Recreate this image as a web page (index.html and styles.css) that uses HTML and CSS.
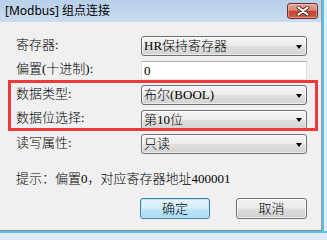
FILE: index.html
```html
<!DOCTYPE html>
<html lang="zh-CN">
<head>
<meta charset="utf-8">
<title>[Modbus] 组点连接</title>
<link rel="stylesheet" href="styles.css">
</head>
<body>
<div class="screen">
  <div class="frame-row">
    <div class="window">
      <div class="titlebar">
        <span class="title">[Modbus] 组点连接</span>
        <span class="close">
          <svg width="14" height="10" viewBox="0 0 14 10">
            <path d="M2.5 1.5 L11.5 8.5 M11.5 1.5 L2.5 8.5" stroke="#5b2a25" stroke-width="4" stroke-linecap="round" fill="none"/>
            <path d="M2.5 1.5 L11.5 8.5 M11.5 1.5 L2.5 8.5" stroke="#ffffff" stroke-width="2.2" stroke-linecap="round" fill="none"/>
          </svg>
        </span>
      </div>
      <div class="content">
        <div class="form">
          <span class="lbl">寄存器:</span>
          <div class="select"><span>HR保持寄存器</span><i class="arrow"></i></div>
          <span class="lbl">偏置(十进制):</span>
          <div class="input">0</div>
          <span class="lbl">数据类型:</span>
          <div class="select"><span>布尔(BOOL)</span><i class="arrow"></i></div>
          <span class="lbl">数据位选择:</span>
          <div class="select"><span>第10位</span><i class="arrow"></i></div>
          <span class="lbl">读写属性:</span>
          <div class="select"><span>只读</span><i class="arrow"></i></div>
        </div>
        <p class="hint">提示：偏置0，对应寄存器地址400001</p>
        <div class="buttons">
          <button class="btn primary">确定</button>
          <button class="btn cancel">取消</button>
        </div>
      </div>
      <div class="highlight"></div>
    </div>
    <div class="frame-right"></div>
  </div>
  <div class="frame-bottom"></div>
</div>
</body>
</html>
```
FILE: styles.css
```css
html, body {
  margin: 0;
  padding: 0;
  background: #dfeaf6;
}

.screen {
  width: 327px;
  height: 234px;
  display: flex;
  flex-direction: column;
  overflow: hidden;
  background: #e2ecf7;
}

.frame-row {
  display: flex;
  height: 231px;
  flex: none;
}

.window {
  width: 322px;
  height: 231px;
  box-sizing: border-box;
  border-right: 1px solid #9a9a9a;
  border-bottom: 1px solid #8a8a8a;
  background: #f0f0f0;
  display: flex;
  flex-direction: column;
  position: relative;
}

.frame-right {
  width: 5px;
  background: linear-gradient(to right, #56c0ee 0, #56c0ee 2px, #e2ecf7 2px);
}

.frame-bottom {
  height: 3px;
  flex: none;
  background: linear-gradient(#56c0ee 0, #56c0ee 2px, #e2ecf7 2px);
}

.titlebar {
  height: 22px;
  flex: none;
  display: flex;
  justify-content: space-between;
  align-items: flex-start;
  background: linear-gradient(#b8d0ea, #c9dcf1);
}

.title {
  font: 12px/22px "Noto Sans", "Noto Sans CJK SC", sans-serif;
  color: #000;
  padding-left: 5px;
}

.close {
  width: 31px;
  height: 16px;
  margin: 3px 3px 0 0;
  box-sizing: border-box;
  border: 1px solid #6e2f28;
  border-radius: 3px;
  background: linear-gradient(#e8a99c 0%, #d88574 45%, #c4442f 52%, #cc5f4a 100%);
  box-shadow: inset 0 0 0 1px rgba(255, 210, 200, 0.45);
  display: flex;
  align-items: center;
  justify-content: center;
}

.close svg {
  display: block;
}

.content {
  flex: 1;
  padding: 14px 0 0 16px;
  font: 300 13px/16px "Liberation Serif", "Noto Sans CJK SC", serif;
  color: #000;
}

.form {
  display: grid;
  grid-template-columns: 125px 166px;
  grid-auto-rows: 20px;
  row-gap: 4.5px;
  align-items: center;
}

.lbl {
  padding-bottom: 3px;
  white-space: nowrap;
}

.select {
  height: 20px;
  box-sizing: border-box;
  border: 1px solid #707070;
  border-radius: 3px;
  background: linear-gradient(#f6f6f6 0%, #ececec 48%, #e0e0e0 52%, #d2d2d2 100%);
  box-shadow: inset 0 0 0 1px rgba(255, 255, 255, 0.6);
  display: flex;
  align-items: center;
  justify-content: space-between;
  padding: 0 4px 0 2px;
  white-space: nowrap;
}

.arrow {
  width: 0;
  height: 0;
  border-left: 3.5px solid transparent;
  border-right: 3.5px solid transparent;
  border-top: 4px solid #000;
  margin-top: 1px;
}

.input {
  align-self: start;
  height: 19px;
  box-sizing: border-box;
  border: 1px solid #abadb3;
  border-color: #abadb3 #dbdfe6 #e3e9ef #e2e3ea;
  background: #fff;
  padding-left: 2px;
  line-height: 17px;
}

.hint {
  margin: 17px 0 0 0;
  white-space: nowrap;
}

.buttons {
  display: flex;
  gap: 26px;
  margin-top: 11px;
  padding-left: 124px;
}

.btn {
  height: 21px;
  width: 70px;
  box-sizing: border-box;
  border-radius: 3px;
  font: 300 13px/16px "Liberation Serif", "Noto Sans CJK SC", serif;
  color: #000;
  padding: 0;
  margin: 0;
}

.btn.primary {
  border: 1px solid #3c7fb1;
  background: linear-gradient(#e6f5fd 0%, #d6effc 48%, #bfe5f9 52%, #a9daf4 100%);
  box-shadow: inset 0 0 0 1px #bfe9fb;
}

.btn.cancel {
  width: 71px;
  border: 1px solid #707070;
  background: linear-gradient(#f2f2f2 0%, #ebebeb 48%, #dddddd 52%, #cfcfcf 100%);
  box-shadow: inset 0 0 0 1px rgba(255, 255, 255, 0.7);
}

.highlight {
  position: absolute;
  left: 8px;
  top: 80px;
  width: 310px;
  height: 51px;
  box-sizing: border-box;
  border: 3px solid #ec3a3b;
  pointer-events: none;
}
```
